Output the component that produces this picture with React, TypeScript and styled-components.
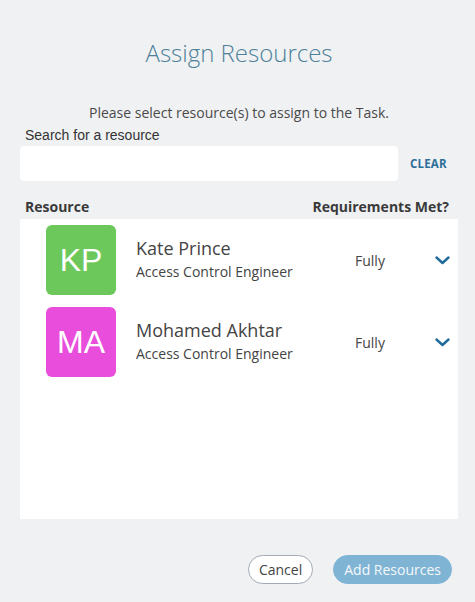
import React from "react";
import styled, { createGlobalStyle } from "styled-components";

const GlobalStyle = createGlobalStyle`
  html, body {
    margin: 0;
    padding: 0;
    background: #f0f1f3;
  }
  body {
    font-family: "Open Sans", "Liberation Sans", Arial, sans-serif;
  }
`;

interface IResource {
  initials: string;
  name: string;
  role: string;
  color: string;
  met: string;
}

const resources: IResource[] = [
  {
    initials: "KP",
    name: "Kate Prince",
    role: "Access Control Engineer",
    color: "#6dc85c",
    met: "Fully",
  },
  {
    initials: "MA",
    name: "Mohamed Akhtar",
    role: "Access Control Engineer",
    color: "#e84edb",
    met: "Fully",
  },
];

const Dialog = styled.div`
  width: 475px;
  height: 602px;
  box-sizing: border-box;
  padding: 37px 17px 0 20px;
  display: flex;
  flex-direction: column;
`;

const Title = styled.h1`
  margin: 0;
  font-weight: 300;
  font-size: 24px;
  line-height: 32px;
  color: #4d8199;
  text-align: center;
`;

const Intro = styled.p`
  margin: 34px 0 0;
  font-size: 14px;
  line-height: 20px;
  color: #4a4a4a;
  text-align: center;
`;

const SearchLabel = styled.label`
  display: block;
  margin: 4px 0 0 5px;
  font-family: "Liberation Sans", Arial, sans-serif;
  font-size: 14px;
  line-height: 16px;
  color: #333;
`;

const SearchRow = styled.div`
  display: flex;
  align-items: center;
  margin-top: 3px;
`;

const SearchInput = styled.input`
  width: 378px;
  height: 35px;
  box-sizing: border-box;
  border: none;
  border-radius: 4px;
  background: #fff;
  outline: none;
  padding: 0 10px;
`;

const ClearButton = styled.button`
  margin-left: 12px;
  border: none;
  background: none;
  padding: 0;
  font-family: "Open Sans", sans-serif;
  font-weight: 700;
  font-size: 11.5px;
  letter-spacing: 0.2px;
  color: #2c6e9a;
`;

const HeaderRow = styled.div`
  display: flex;
  justify-content: space-between;
  margin-top: 16px;
  padding: 0 9px 0 5px;
  font-weight: 700;
  font-size: 14px;
  line-height: 19px;
  color: #3a3a3a;
`;

const ListPanel = styled.div`
  margin-top: 3px;
  height: 300px;
  box-sizing: border-box;
  background: #fff;
  padding: 6px 8px 0 26px;
  display: flex;
  flex-direction: column;
  gap: 12px;
`;

const Row = styled.div`
  display: grid;
  grid-template-columns: 70px 199px 60px 15px;
  column-gap: 20px;
  align-items: center;
  height: 70px;
`;

const Avatar = styled.div<{ $bg: string }>`
  width: 70px;
  height: 70px;
  border-radius: 6px;
  background: ${(p) => p.$bg};
  color: #fff;
  display: flex;
  align-items: center;
  justify-content: center;
  font-family: "Liberation Sans", Arial, sans-serif;
  font-size: 32px;
`;

const Info = styled.div`
  display: flex;
  flex-direction: column;
  padding-bottom: 2px;
`;

const Name = styled.div`
  font-size: 18px;
  line-height: 22px;
  color: #444;
`;

const Role = styled.div`
  margin-top: 4px;
  font-size: 14px;
  line-height: 18px;
  color: #444;
`;

const Met = styled.div`
  font-size: 14px;
  color: #444;
`;

const Chevron = () => (
  <svg width="15" height="9" viewBox="0 0 15 9">
    <polyline
      points="1.5,1.5 7.5,7 13.5,1.5"
      fill="none"
      stroke="#1f6b9c"
      strokeWidth="2.4"
      strokeLinecap="round"
      strokeLinejoin="round"
    />
  </svg>
);

const Footer = styled.div`
  display: flex;
  justify-content: flex-end;
  gap: 20px;
  margin-top: 36px;
  padding-right: 6px;
`;

const PillButton = styled.button<{ $primary?: boolean }>`
  height: 29px;
  box-sizing: border-box;
  border-radius: 15px;
  font-family: "Open Sans", sans-serif;
  font-size: 14px;
  padding: 0 10px;
  border: 1px solid ${(p) => (p.$primary ? "#80b4d4" : "#a3aab5")};
  background: ${(p) => (p.$primary ? "#80b4d4" : "#fff")};
  color: ${(p) => (p.$primary ? "#f4f8fb" : "#444")};
`;

function App(): JSX.Element {
  return (
    <>
      <GlobalStyle />
      <Dialog>
        <Title>Assign Resources</Title>
        <Intro>Please select resource(s) to assign to the Task.</Intro>
        <SearchLabel>Search for a resource</SearchLabel>
        <SearchRow>
          <SearchInput />
          <ClearButton>CLEAR</ClearButton>
        </SearchRow>
        <HeaderRow>
          <span>Resource</span>
          <span>Requirements Met?</span>
        </HeaderRow>
        <ListPanel>
          {resources.map((r) => (
            <Row key={r.initials}>
              <Avatar $bg={r.color}>{r.initials}</Avatar>
              <Info>
                <Name>{r.name}</Name>
                <Role>{r.role}</Role>
              </Info>
              <Met>{r.met}</Met>
              <Chevron />
            </Row>
          ))}
        </ListPanel>
        <Footer>
          <PillButton>Cancel</PillButton>
          <PillButton $primary>Add Resources</PillButton>
        </Footer>
      </Dialog>
    </>
  );
}

export default App;
